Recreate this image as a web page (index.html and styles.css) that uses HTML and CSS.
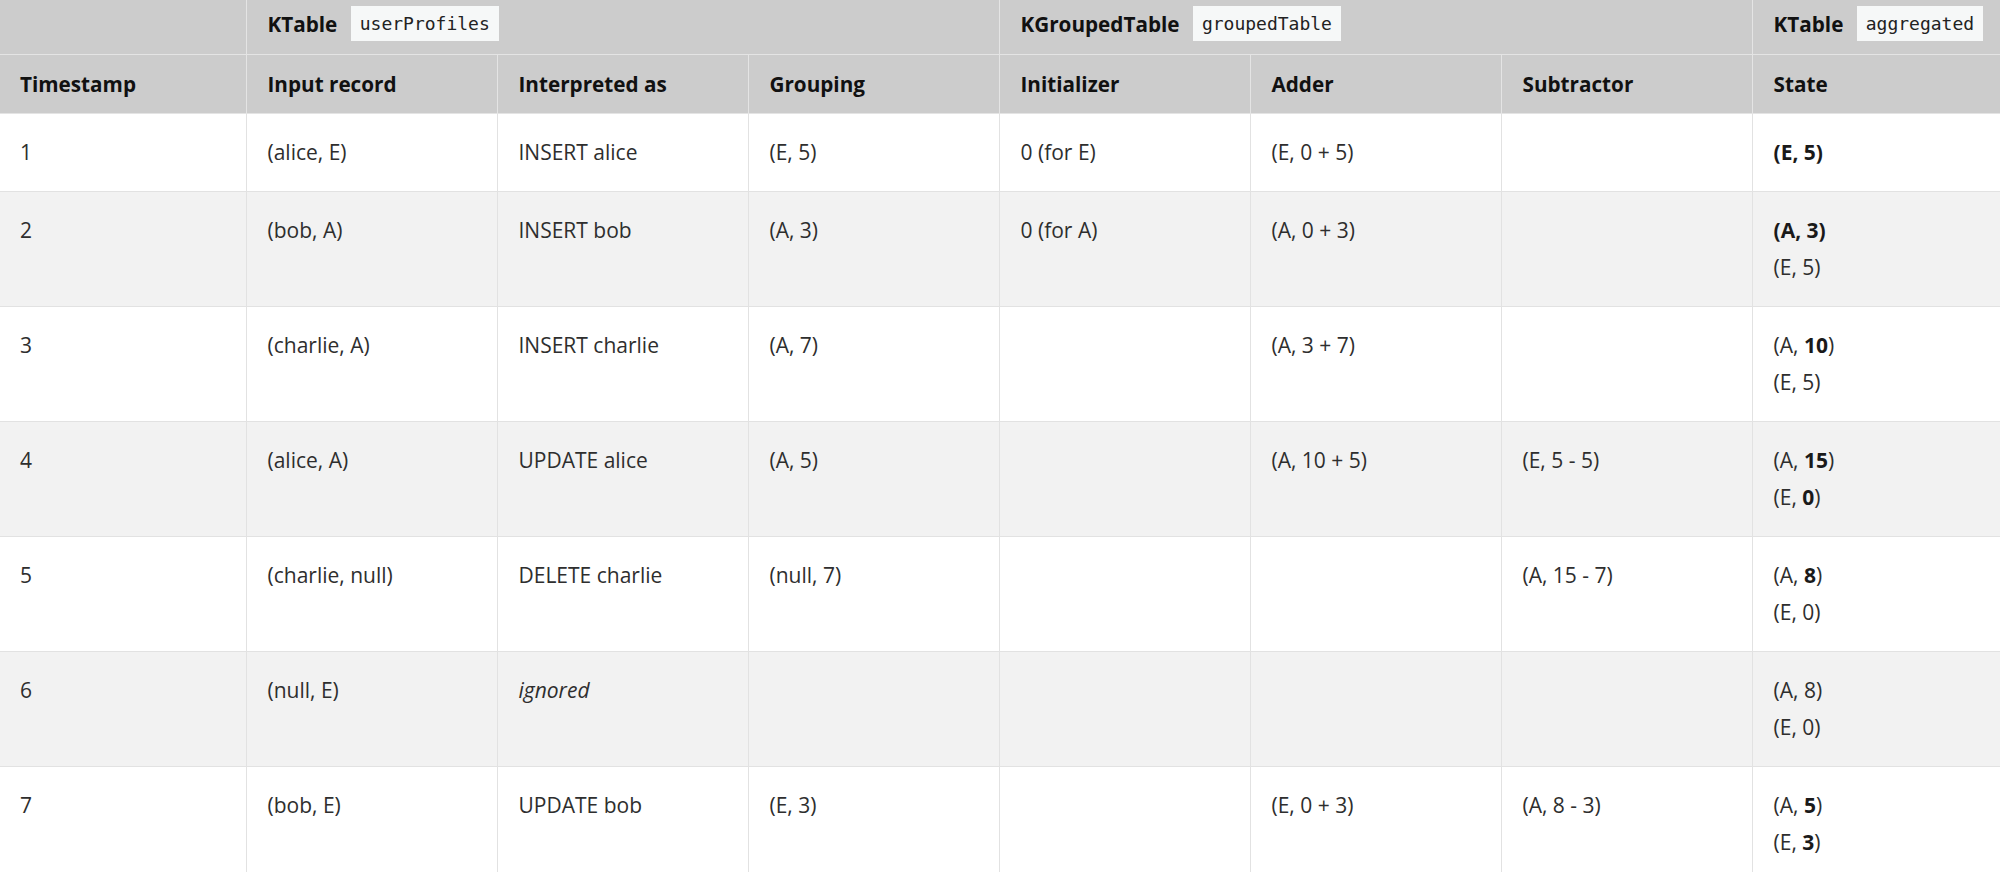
FILE: index.html
```html
<!DOCTYPE html>
<html lang="en">
<head>
<meta charset="utf-8">
<title>KTable aggregation</title>
<link rel="stylesheet" href="styles.css">
</head>
<body>
<table class="flow">
  <colgroup>
    <col class="col-first">
    <col class="col"><col class="col"><col class="col">
    <col class="col"><col class="col"><col class="col">
    <col class="col">
  </colgroup>
  <thead>
    <tr class="groups">
      <th></th>
      <th colspan="3">KTable <code>userProfiles</code></th>
      <th colspan="3">KGroupedTable <code>groupedTable</code></th>
      <th>KTable <code>aggregated</code></th>
    </tr>
    <tr class="names">
      <th>Timestamp</th>
      <th>Input record</th>
      <th>Interpreted as</th>
      <th>Grouping</th>
      <th>Initializer</th>
      <th>Adder</th>
      <th>Subtractor</th>
      <th>State</th>
    </tr>
  </thead>
  <tbody>
    <tr>
      <td>1</td><td>(alice, E)</td><td>INSERT alice</td><td>(E, 5)</td><td>0 (for E)</td><td>(E, 0 + 5)</td><td></td>
      <td><strong>(E, 5)</strong></td>
    </tr>
    <tr>
      <td>2</td><td>(bob, A)</td><td>INSERT bob</td><td>(A, 3)</td><td>0 (for A)</td><td>(A, 0 + 3)</td><td></td>
      <td><strong>(A, 3)</strong><br>(E, 5)</td>
    </tr>
    <tr>
      <td>3</td><td>(charlie, A)</td><td>INSERT charlie</td><td>(A, 7)</td><td></td><td>(A, 3 + 7)</td><td></td>
      <td>(A, <strong>10</strong>)<br>(E, 5)</td>
    </tr>
    <tr>
      <td>4</td><td>(alice, A)</td><td>UPDATE alice</td><td>(A, 5)</td><td></td><td>(A, 10 + 5)</td><td>(E, 5 - 5)</td>
      <td>(A, <strong>15</strong>)<br>(E, <strong>0</strong>)</td>
    </tr>
    <tr>
      <td>5</td><td>(charlie, null)</td><td>DELETE charlie</td><td>(null, 7)</td><td></td><td></td><td>(A, 15 - 7)</td>
      <td>(A, <strong>8</strong>)<br>(E, 0)</td>
    </tr>
    <tr>
      <td>6</td><td>(null, E)</td><td><em>ignored</em></td><td></td><td></td><td></td><td></td>
      <td>(A, 8)<br>(E, 0)</td>
    </tr>
    <tr>
      <td>7</td><td>(bob, E)</td><td>UPDATE bob</td><td>(E, 3)</td><td></td><td>(E, 0 + 3)</td><td>(A, 8 - 3)</td>
      <td>(A, <strong>5</strong>)<br>(E, <strong>3</strong>)</td>
    </tr>
  </tbody>
</table>
</body>
</html>
```

FILE: styles.css
```css
html, body {
  margin: 0;
  padding: 0;
  overflow: hidden;
  background: #ffffff;
}

.flow {
  border-collapse: collapse;
  table-layout: fixed;
  width: 2003px;
  font-family: "Open Sans", "Noto Sans", sans-serif;
  font-size: 21px;
  color: #2e2e2e;
}

.col-first { width: 246px; }
.col { width: 251px; }

.flow th,
.flow td {
  text-align: left;
  vertical-align: top;
  line-height: 37px;
  padding: 20px 20px 20px 21px;
  border: 1px solid #e2e2e2;
}

.flow tr > :first-child {
  border-left: 0;
  padding-left: 20px;
}
.flow thead tr:first-child > * { border-top: 0; }

.flow thead th {
  background: #cccccc;
  color: #111111;
  font-weight: 700;
  font-size: 20.7px;
  border-color: #e4e4e4;
  white-space: nowrap;
}

.flow .groups th {
  padding-top: 6px;
  padding-bottom: 11px;
  padding-right: 0;
}

.flow .names th {
  padding-top: 11px;
  padding-bottom: 10px;
}

.flow code {
  display: inline-block;
  vertical-align: top;
  font-family: "DejaVu Sans Mono", "Liberation Mono", monospace;
  font-size: 18px;
  font-weight: 400;
  line-height: 35px;
  padding: 0 9px;
  margin-left: 8px;
  background: #f6f8f8;
  color: #222222;
}

.flow tbody tr:nth-child(even) td {
  background: #f2f2f2;
}

.flow td strong {
  font-weight: 700;
  color: #1a1a1a;
}

.flow td em {
  font-style: italic;
}
```
